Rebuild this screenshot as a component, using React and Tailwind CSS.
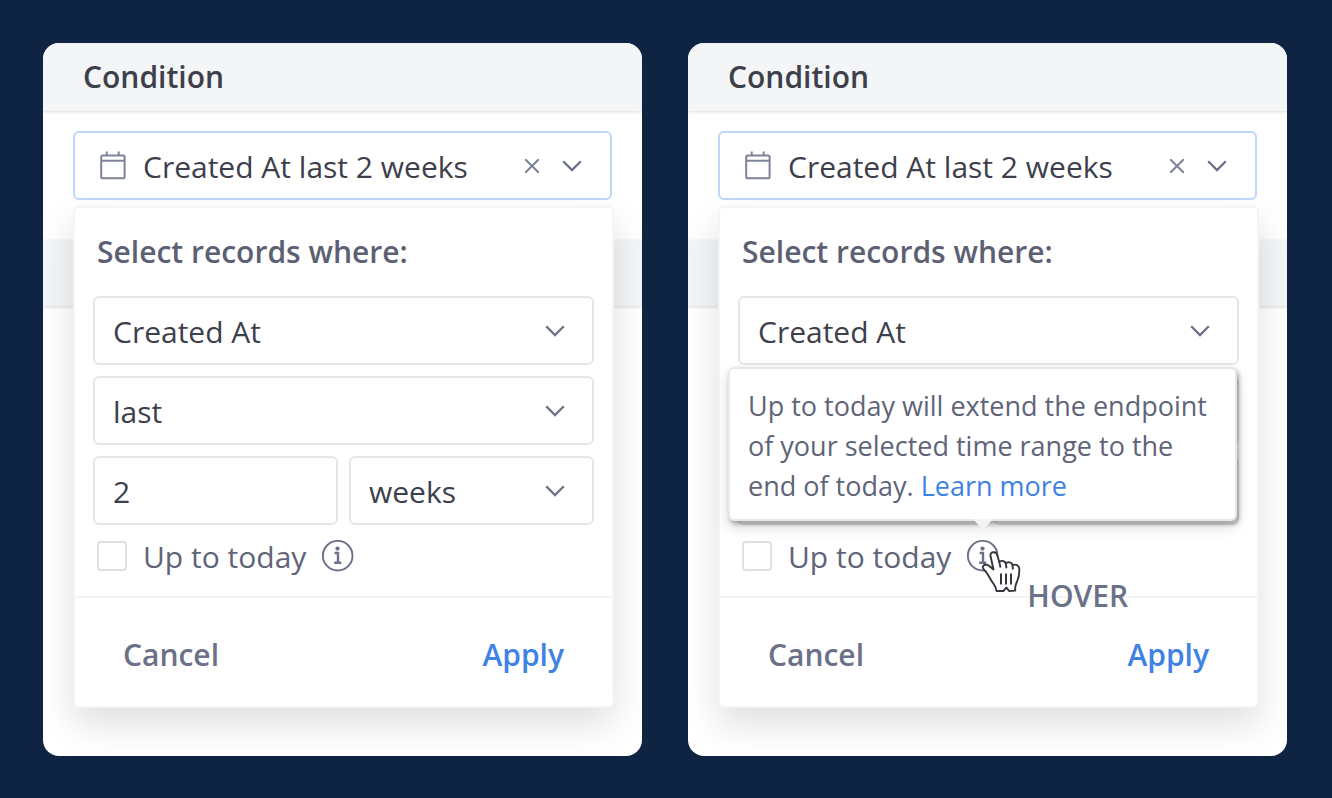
import { useState } from "react";

function Chevron({ className = "" }) {
  return (
    <svg
      width="20"
      height="12"
      viewBox="0 0 20 12"
      fill="none"
      stroke="currentColor"
      strokeWidth="2.3"
      className={`text-[#6b7188] ${className}`}
      aria-hidden="true"
    >
      <path d="M1.2 1.2 10 10l8.8-8.8" />
    </svg>
  );
}

function CalendarIcon() {
  return (
    <svg
      width="26"
      height="30"
      viewBox="0 0 26 30"
      fill="none"
      stroke="currentColor"
      strokeWidth="2"
      className="shrink-0 text-[#7d8399]"
      aria-hidden="true"
    >
      <rect x="1.2" y="4.500" width="23.4" height="22.8" rx="1.6" />
      <path d="M1.2 9.8h23.4M6.7.5v4M18.7.5v4" />
    </svg>
  );
}

function InfoIcon() {
  return (
    <svg width="32" height="32" viewBox="0 0 32 32" fill="none" className="text-[#6b7188]" aria-hidden="true">
      <circle cx="15.700" cy="15.700" r="14.8" stroke="currentColor" strokeWidth="1.9" />
      <circle cx="15.5" cy="8.6" r="2.100" fill="currentColor" />
      <path d="M12.600 13h3.400v9.600M12.200 22.800h7" stroke="currentColor" strokeWidth="2.4" />
    </svg>
  );
}

function PointerIcon() {
  return (
    <svg
      width="42"
      height="46"
      viewBox="0 0 42 46"
      fill="white"
      stroke="#35373d"
      strokeWidth="1.9"
      strokeLinejoin="round"
      strokeLinecap="round"
      aria-hidden="true"
    >
      <path d="M9.500 6C8.600 1.800 14.800.8 16 4.500L18.300 12C19.500 10.200 24 10.500 24.800 13.500C26.500 11.500 31 12 31.600 15.200C34.500 13.600 38.300 15.500 38.300 19C38.500 24 37.800 28 35.800 32C34.400 35 33.800 37 34.200 40.600L28 41L25.500 37.500L22.300 41L15.500 41C15.200 38.200 14.500 36.600 13 34.500C9.500 30 8 26 5.500 22.500C4 20.500 1.300 19 1.800 16.800C2.400 14.500 5.300 14 7.500 15.500L12.500 19.500Z" />
      <path d="M18.300 12l1 4.800M24.800 13.500l.6 4M31.600 15.200l.2 3.600" />
      <path d="M20 24.300v9.500M25 24.300v9.500M30 24.300v9.500" strokeWidth="2" />
    </svg>
  );
}

function SelectField({ label, value, options, onChange }) {
  return (
    <div className="relative">
      <select
        aria-label={label}
        value={value}
        onChange={(e) => onChange(e.target.value)}
        className="w-full h-[69px] appearance-none rounded-md border-2 border-[#e6e6e7]
                   bg-white pt-0.5 pl-[18px] pr-14 text-[30px] text-[#3d404c]"
      >
        {options.map((o) => (
          <option key={o}>{o}</option>
        ))}
      </select>
      <Chevron className="pointer-events-none absolute right-[29px] top-[29px]" />
    </div>
  );
}

function Tooltip() {
  return (
    <div
      role="tooltip"
      className="absolute -left-2.5 right-0.5 bottom-full mb-[19px] rounded-md border-2 border-[#e8e8e8]
                 bg-white pt-[17px] pb-[13px] pl-[18px] pr-3 text-[27px] leading-10 text-[#5f6478]
                 shadow-[2px_3px_4px_rgba(0,0,0,0.3),0_6px_14px_rgba(0,0,0,0.15)]"
    >
      Up to today will extend the endpoint of your selected time range to the
      end of today.{" "}
      <a href="#learn-more" className="text-[#3f82e4]">
        Learn more
      </a>
      <svg width="20" height="12" viewBox="0 0 20 12" className="absolute left-[243px] top-full" aria-hidden="true">
        <path d="M0 0h20l-10 11z" fill="#f4f4f4" />
      </svg>
    </div>
  );
}

function ConditionCard({ id, hovered = false }) {
  const [field, setField] = useState("Created At");
  const [operator, setOperator] = useState("last");
  const [amount, setAmount] = useState("2");
  const [unit, setUnit] = useState("weeks");
  const [upToToday, setUpToToday] = useState(false);

  return (
    <section className="relative isolate overflow-hidden rounded-2xl bg-white pb-12">
      {/* Next row of the page, behind the menu */}
      <div className="absolute inset-x-0 top-[197px] -z-10 h-[66px] bg-[#f4f5f7] shadow-[0_1px_3px_rgba(0,0,0,0.15)]" />

      {/* Header */}
      <h2
        className="h-[68px] bg-[#f4f5f7] px-10 text-[30px] leading-[68px] font-semibold
                   text-[#3d3f4a] shadow-[0_1px_3px_rgba(0,0,0,0.15)]"
      >
        Condition
      </h2>

      <div className="px-[30px] pt-5">
        {/* Current condition */}
        <div className="flex h-[69px] items-center rounded-md border-2 border-[#bfd7f8] bg-white pl-[25px] pr-7">
          <CalendarIcon />
          <span className="ml-[17px] flex-1 pt-0.5 whitespace-nowrap text-[30px] text-[#3d404c]">
            {field} {operator} {amount} {unit}
          </span>
          <button type="button" aria-label="Clear condition" className="text-[#7d8399]">
            <svg width="14" height="14" viewBox="0 0 14 14" stroke="currentColor" strokeWidth="2">
              <path d="M0 0l14 14M14 0 0 14" />
            </svg>
          </button>
          <button type="button" aria-label="Toggle menu" className="ml-[23px]">
            <Chevron />
          </button>
        </div>
      </div>

      {/* Menu */}
      <form
        onSubmit={(e) => e.preventDefault()}
        className="mt-1.5 mr-7 ml-[30px] rounded-md border-2 border-[#f4f5f6] bg-white
                   shadow-[0_16px_36px_rgba(0,0,0,0.13)]"
      >
        <div className="px-[18px] pt-6 pb-6">
          <h3 className="px-1 text-[30px] leading-10 font-semibold text-[#5c6073]">
            Select records where:
          </h3>

          <div className="mt-6 flex flex-col gap-[11px]">
            <SelectField
              label="Field"
              value={field}
              options={["Created At", "Updated At"]}
              onChange={setField}
            />
            <SelectField
              label="Operator"
              value={operator}
              options={["last", "next"]}
              onChange={setOperator}
            />
            <div className="grid grid-cols-2 gap-[11px]">
              <input
                type="text"
                aria-label="Amount"
                value={amount}
                onChange={(e) => setAmount(e.target.value)}
                className="h-[69px] w-full rounded-md border-2 border-[#e6e6e7] bg-white px-[18px] pt-0.5
                           text-[30px] text-[#3d404c]"
              />
              <SelectField
                label="Unit"
                value={unit}
                options={["days", "weeks", "months"]}
                onChange={setUnit}
              />
            </div>
          </div>

          <div className="relative mt-[15px] flex h-8 items-center px-1">
            <input
              id={id}
              type="checkbox"
              checked={upToToday}
              onChange={(e) => setUpToToday(e.target.checked)}
              className="size-[30px] appearance-none rounded border-2 border-[#e0e0e1] bg-white checked:bg-[#3f82e4]"
            />
            <label htmlFor={id} className="ml-4 text-[30px] text-[#5f6478]">
              Up to today
            </label>
            <div className="relative ml-4 h-8">
              <button type="button" aria-label="About up to today" className="block">
                <InfoIcon />
              </button>
              {hovered && (
                <div className="absolute left-3.5 top-2.5 flex">
                  <PointerIcon />
                  <span className="mt-[26px] ml-1 text-[30px] leading-10 font-semibold text-[#6b7188]">
                    HOVER
                  </span>
                </div>
              )}
            </div>
            {hovered && <Tooltip />}
          </div>
        </div>

        {/* Actions */}
        <div className="flex justify-between border-t-2 border-[#f3f4f5] px-12 pt-[37px] pb-[31px] text-[30px] leading-10 font-semibold">
          <button type="button" className="text-[#6b7188]">
            Cancel
          </button>
          <button type="submit" className="text-[#3f82e4]">
            Apply
          </button>
        </div>
      </form>
    </section>
  );
}

export default function App() {
  return (
    <main className="min-h-screen bg-[#0f2342] pt-[43px] pr-[45px] pb-[42px] pl-[43px] font-['Open_Sans','Noto_Sans',sans-serif]">
      <div className="grid grid-cols-2 items-start gap-[46px]">
        <ConditionCard id="up-to-today" />
        <ConditionCard id="up-to-today-hover" hovered />
      </div>
    </main>
  );
}
